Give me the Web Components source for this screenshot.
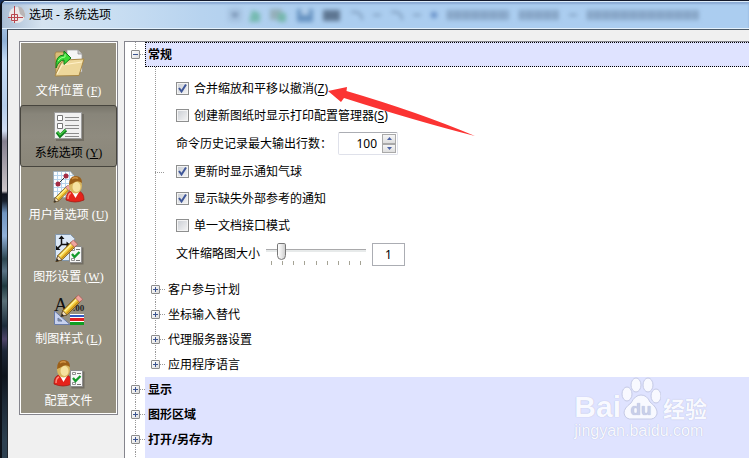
<!DOCTYPE html>
<html lang="zh-CN">
<head>
<meta charset="utf-8">
<meta name="viewport" content="width=device-width, initial-scale=1">
<title>选项 - 系统选项</title>
<style>
    html, body { height: 100%; }
    body {
        margin: 0;
        font: 12px/16px "Noto Sans", "Noto Sans CJK SC", sans-serif;
        color: #000;
        background: #16305e;
        overflow: hidden;
    }
</style>
</head>
<body>
<options-window caption="选项 - 系统选项">
    <side-bar slot="side">
        <side-item icon="folder" label="文件位置" key="F"></side-item>
        <side-item icon="list" label="系统选项" key="Y" selected></side-item>
        <side-item icon="user" label="用户首选项" key="U"></side-item>
        <side-item icon="drawing" label="图形设置" key="W"></side-item>
        <side-item icon="style" label="制图样式" key="L"></side-item>
        <side-item icon="profile" label="配置文件"></side-item>
    </side-bar>
    <option-tree>
        <tree-section label="常规" open focused>
            <option-group>
                <check-option label="合并缩放和平移以撤消" key="Z" checked></check-option>
                <check-option label="创建新图纸时显示打印配置管理器" key="S"></check-option>
                <spin-option label="命令历史记录最大输出行数：" value="100"></spin-option>
                <check-option label="更新时显示通知气球" checked></check-option>
                <check-option label="显示缺失外部参考的通知" checked></check-option>
                <check-option label="单一文档接口模式"></check-option>
                <slider-option label="文件缩略图大小" value="1"></slider-option>
                <pointer-arrow slot="mark"></pointer-arrow>
            </option-group>
            <tree-leaf label="客户参与计划"></tree-leaf>
            <tree-leaf label="坐标输入替代"></tree-leaf>
            <tree-leaf label="代理服务器设置"></tree-leaf>
            <tree-leaf label="应用程序语言" last></tree-leaf>
        </tree-section>
        <tree-section label="显示"></tree-section>
        <tree-section label="图形区域"></tree-section>
        <tree-section label="打开/另存为"></tree-section>
        <tree-section label=""></tree-section>
    </option-tree>
    <site-mark slot="mark"></site-mark>
</options-window>

<script>
// small helper shared by all the elements
class BaseElement extends HTMLElement {
    constructor(){
        super();
        this.attachShadow({mode: 'open'});
    }
    attr(name) {
        return this.getAttribute(name) || '';
    }
    connectedCallback(){
        const template = document.createElement('template');
        template.innerHTML = `<style>:host,*{box-sizing:border-box}${this.getStyles()}</style>${this.getMarkup()}`;
        this.shadowRoot.replaceChildren(template.content.cloneNode(true));
    }
}

// plus / minus box of the tree
const toggleStyles = `
    .toggle{
        flex: none;
        width: 9px;
        height: 9px;
        padding: 0;
        border: 1px solid #8b8b8b;
        border-radius: 1px;
        background: linear-gradient(135deg, #fff, #dcdcdc);
    }
    .toggle svg{ display: block; }
    .dots{
        flex: none;
        height: 1px;
        background: repeating-linear-gradient(90deg, #999 0 1px, transparent 1px 2px);
    }
`;
const toggleButton = (open, label) => `
    <button class="toggle" aria-label="${label}" aria-expanded="${open}">
        <svg width="7" height="7" viewBox="0 0 7 7" shape-rendering="crispEdges"><path d="M1 3h5v1H1z${open ? '' : 'M3 1h1v5H3z'}" fill="#3b5490"/></svg>
    </button>`;

const pencil = (x, y) => `
    <g transform="translate(${x} ${y}) scale(1.2)">
        <path d="M0 18 1.500 13 13 1.500 16.500 5 5 16.500Z" fill="#f5cf3c" stroke="#6a4a12" stroke-width=".8"/>
        <path d="M3 13.500 13.500 3" stroke="#fff2a0" stroke-width="1.2"/>
        <path d="M4.500 15.500 15.500 4.500" stroke="#c88a16"/>
        <path d="M0 18 1.500 13 5 16.500Z" fill="#f4dfba" stroke="#5b4325" stroke-width=".6"/>
        <path d="M0 18 .8 15.500 2.500 17.200Z" fill="#222"/>
        <path d="M12 2.500 14.500 0 18 3.500 15.500 6Z" fill="#f0a59e" stroke="#a85550" stroke-width=".6"/>
    </g>`;
const person = (x, y) => `
    <g transform="translate(${x} ${y})">
        <path d="M0 21Q0 13 5 12H12Q18 13 18 21 9 25 0 21Z" fill="#e5231b" stroke="#a1140d" stroke-width=".7"/>
        <path d="M2 20Q2 15 5 14" stroke="#ff8a78" fill="none" stroke-width="1.500"/>
        <path d="M6 13 9.500 19 13 13Z" fill="#fff"/>
        <ellipse cx="9.500" cy="6.500" rx="6.500" ry="8" fill="#d9b75f"/>
        <ellipse cx="10.500" cy="8" rx="4" ry="5" fill="#f6e29f"/>
        <path d="M3 6Q3 -3 9.500 -3 16 -3 16 4 12 1 9 3 6 5 3 6Z" fill="#9c5f18"/>
        <path d="M6 0Q9 -2.500 12 -.5" stroke="#cf9141" fill="none" stroke-width="1.500"/>
    </g>`;
const checkPage = (x, y) => `
    <g transform="translate(${x} ${y})">
        <path d="M1.500 1.500h13v17h-13z" fill="#55524a" opacity=".55"/>
        <path d="M.5.500h12v16H.5z" fill="#f7f7f7" stroke="#8d8d8d"/>
        <path d="M2.500 2.500h3v2h-3zM2.500 12.500h3v2h-3z" fill="#fff" stroke="#777" stroke-width=".8"/>
        <path d="M7 3.500h4M7 14.500h4" stroke="#777"/>
        <path d="M3 8 5.500 11 10.500 6" fill="none" stroke="#159b2d" stroke-width="2.300"/>
    </g>`;

const icons = {
    folder: `
        <path d="M2 7 3 5h7l2 2h6v21H3Z" fill="#d9bd79" stroke="#a18242" stroke-width=".8"/>
        <path d="M14 3h11l4 4v18H14Z" fill="#f5f5f5" stroke="#9b9b9b" stroke-width=".7"/>
        <path d="M25 3v4h4" fill="#ccc" stroke="#888" stroke-width=".7"/>
        <path d="M2 29 8 16 12 13 31 12 26 28.500Z" fill="#edd79b" stroke="#a98845"/>
        <path d="M4 27 9 18 29 15" fill="none" stroke="#fff0c7" stroke-width="1.200"/>
        <path d="M3 21Q2 8 11 8V4L18 11 11 17.500V13Q6 13 3 21Z" fill="#39d936" stroke="#13791a"/>
        <path d="M5 14Q7 10 12 10V7" fill="none" stroke="#a5ff93"/>`,
    list: `
        <path d="M3 5h28v27H3z" fill="#55524a" opacity=".5"/>
        <path d="M1.500 3.500h27v26h-27z" fill="#f1f1f1" stroke="#9d9d9d"/>
        <path d="M4.500 6.500h5v5h-5zM4.500 14.500h5v5h-5z" fill="#fff" stroke="#777"/>
        <path d="M12 8.500h14M12 11.500h14M12 16.500h14M12 19.500h14M12 24.500h14M12 27.500h14" stroke="#8b8b8b"/>
        <path d="M4 23 7 27 13 21" fill="none" stroke="#0d7c1d" stroke-width="3.200"/>
        <path d="M4.500 23 7 26 12.500 21" fill="none" stroke="#49cf46" stroke-width="1.200"/>`,
    user: `
        <path d="M.5.500h17l4 5v21H.5z" fill="#fbfdff" stroke="#91a6b9" stroke-width=".7"/>
        <path d="M4.500 1v25M8.500 1v25M12.500 1v25M16.500 1v25M1 4.500h20M1 8.500h20M1 12.500h20M1 16.500h20M1 20.500h20" stroke="#b5d3ec"/>
        <path d="M5 13 13 5" stroke="#333"/>
        <circle cx="5" cy="13" r="2.500" fill="#a32a43"/><circle cx="13" cy="5" r="2.500" fill="#a32a43"/>
        <g transform="translate(1 14) scale(.8)">${pencil(0, 0)}</g>${person(13, 8)}`,
    drawing: `
        <path d="M2.500 1.500h15l4 4v22h-19z" fill="#dce9f7" stroke="#8297ac"/>
        <path d="M8.500 4v7.500H15M8.500 11.500 5 15" fill="none" stroke="#111" stroke-width="1.500"/>
        <path d="M5.500 6 8.500 2.500 11.500 6ZM13.500 8.500 17 11.500 13.500 14.500ZM3 12.500V17h4.500Z" fill="#111"/>
        ${checkPage(16, 13)}${pencil(3, 7)}`,
    style: `
        <path d="M17 19h14v3H17z" fill="#315bc1"/><path d="M17 19h14v1H17zM17 22h14v1H17zM17 26h14v1H17z" fill="#fff"/>
        <path d="M17 23h14v3H17z" fill="#df1d22"/><path d="M17 27h14v3H17z" fill="#119d22"/>
        <path d="M1.500 16 17 29.500H1.500ZM5 23v3h4Z" fill="#c8d2ee" stroke="#697ca8" fill-rule="evenodd"/>
        <text x="1" y="16" font-family="Liberation Serif" font-size="19" fill="#111">A</text>
        ${pencil(8, 0)}
        <text x="20" y="16" font-family="Liberation Serif" font-size="9" font-weight="700" fill="#222">.00</text>`,
    profile: `${person(1, 6)}${checkPage(17, 13)}`
};

class OptionsWindow extends BaseElement {
    getMarkup() {
        return `
        <header>
            <svg class="logo" width="18" height="18" viewBox="0 0 18 18">
                <circle cx="9" cy="9" r="8" fill="#ebe7e8"/>
                <path d="M10 0Q18 2 17 12L12 8Z" fill="#b9b5b6"/>
                <path d="M6.500 0v17M0 11.500h15" stroke="#b9474e"/>
                <path d="M3.500 8.500h6v6h-6z" fill="none" stroke="#b9474e"/>
            </svg>
            <h1>${this.attr('caption')}</h1>
            <div class="glass" aria-hidden="true">
                <svg width="113" height="20" viewBox="0 0 113 20">
                    <path d="M0 3h14v14H0z" fill="#9db9d8"/><path d="M3 8h8l-4 5z" fill="#3c5474"/>
                    <path d="M24 5l8 3v9h-11z" fill="#4fac88"/>
                    <path d="M42 4h12v11H42z" fill="#849b98"/><path d="M50 8h8v9h-8z" fill="#50a880"/>
                    <path d="M69 4h16v13H69z" fill="#3d6fa5"/><path d="M73 4h8v6h-8z" fill="#b2cbe5"/>
                    <path d="M95 5h17v11H95z" fill="#2c3e55"/>
                </svg>
                <i class="undo"></i><i></i><i class="undo"></i><i></i><i class="dot"></i>
                <i class="name"></i><i class="year"></i><i></i><i class="file"></i>
            </div>
        </header>
        <main>
            <slot name="side"></slot>
            <slot></slot>
        </main>
        <slot name="mark"></slot>`;
    }
    getStyles() {
        return `
        :host{
            position: relative;
            display: flex;
            flex-direction: column;
            height: 100vh;
            padding-left: 5px;
            border-left: 2px solid #0d1118;
            border-top: 1px solid #12182a;
            background: linear-gradient(#c4d8ee 0, #8fb0d6 40px, #c6dcf5 60px, #b5cdea 105px, #d0dcf0 130px, #85808f 140px, #cbc5c8 190px, #10141f 193px, #18202c 200px, #7095c0 212px, #90b0d8 235px, #2c4650 258px, #5a7385 270px, #1f3a40 285px, #5a7078 300px, #1c2c3a 325px, #4d4468 338px, #1c2636 350px, #0e141c 375px, #1c2835 400px, #2d4050 440px);
            border-radius: 6px 0 0 0;
            overflow: hidden;
        }
        header{
            display: flex;
            align-items: center;
            height: 28px;
            flex: none;
            margin-left: -5px;
            padding-left: 6px;
            border-top: 1px solid #dcecfa;
            border-bottom: 1px solid #e4f1fc;
            background: linear-gradient(90deg, #a9bdd4, #d5e3f0 40px, #c9def2 110px, #b7d3ef 200px, #abcdef 300px, #abcdf0);
            box-shadow: inset 0 2px 2px #8aa9d3;
        }
        .logo{ flex: none; }
        h1{
            margin: 0 0 0 3px;
            font-size: 12px;
            font-weight: 400;
            white-space: nowrap;
        }
        /* what shines through the frame from the window behind */
        .glass{
            display: flex;
            align-items: center;
            gap: 10px;
            margin-left: 117px;
            filter: blur(2px);
            opacity: .6;
        }
        .glass i{ flex: none; width: 8px; height: 2px; background: #5d7797; }
        .glass .undo{ width: 12px; height: 9px; border: solid #5d7797; border-width: 2px 2px 0 0; border-radius: 0 8px 0 0; background: none; }
        .glass .dot{ width: 6px; height: 6px; background: #3f6cb0; }
        .glass .name{ width: 62px; }
        .glass .year{ width: 40px; }
        .glass .file{ width: 112px; }
        .glass .name, .glass .year, .glass .file{
            height: 10px;
            background: repeating-linear-gradient(90deg, #6580a0 0 3px, #86a3c4 3px 5px, #6f8bab 5px 8px, #96b4d5 8px 9px);
        }
        main{
            flex: 1;
            min-height: 0;
            display: flex;
            gap: 6px;
            align-items: flex-start;
            padding: 11px 0 0 11px;
            border-top: 1px solid #4d5b69;
            border-left: 1px solid #20252c;
            background: #f0f0f0;
        }
        `;
    }
}
customElements.define("options-window", OptionsWindow);

class SideBar extends BaseElement {
    getMarkup() {
        return `<nav><slot></slot></nav>`;
    }
    getStyles() {
        return `
        :host{
            display: block;
            flex: none;
            width: 99px;
            border: 1px solid #85858d;
        }
        nav{
            border: 1px solid #fff;
            background: #959080;
        }
        `;
    }
}
customElements.define("side-bar", SideBar);

class SideItem extends BaseElement {
    getMarkup() {
        const key = this.attr('key') ? `<span>(<u>${this.attr('key')}</u>)</span>` : '';
        return `
        <button>
            <svg width="32" height="32" viewBox="0 0 32 32" aria-hidden="true">${icons[this.attr('icon')]}</svg>
            <span class="label">${this.attr('label')}${key}</span>
        </button>`;
    }
    getStyles() {
        return `
        :host{ display: block; height: 62px; }
        :host([selected]){ margin: 0 -1px; }
        :host(:last-child){ height: 60px; }
        button{
            display: flex;
            flex-direction: column;
            align-items: center;
            gap: 4px;
            width: 100%;
            height: 100%;
            padding: 3px 0 0;
            border: 1px solid transparent;
            border-radius: 3px;
            background: none;
            color: #fff;
            font: 12px/16px "Liberation Serif", "Noto Sans CJK SC", serif;
        }
        :host([selected]) button{
            color: #000;
            border-color: #47453e;
            background: linear-gradient(#78756a, #88857a 8px, #8f8b7f 50%, #8a8679);
        }
        svg{ flex: none; overflow: visible; }
        .label{ display: flex; gap: 3px; white-space: nowrap; }
        `;
    }
}
customElements.define("side-item", SideItem);

class OptionTree extends BaseElement {
    getMarkup() {
        return `<slot></slot>`;
    }
    getStyles() {
        return `
        :host{
            display: block;
            flex: 1;
            align-self: stretch;
            overflow: hidden;
            border: solid #85858d;
            border-width: 1px 0 0 1px;
            background: #fff;
        }
        `;
    }
}
customElements.define("option-tree", OptionTree);

class TreeSection extends BaseElement {
    getMarkup() {
        const label = this.attr('label');
        return `
        <div class="row">
            <div class="branch">${label ? toggleButton(this.hasAttribute('open'), label) + '<span class="dots"></span>' : ''}</div>
            <h2>${label}</h2>
        </div>
        <div class="children"><slot></slot></div>`;
    }
    getStyles() {
        return `
        ${toggleStyles}
        :host{
            display: block;
            background: repeating-linear-gradient(#999 0 1px, transparent 1px 2px) 10px 0 / 1px 100% no-repeat;
        }
        .row{
            display: flex;
            align-items: center;
            height: 25px;
        }
        .branch{
            display: flex;
            align-items: center;
            flex: none;
            width: 20px;
            padding-left: 6px;
        }
        .dots{ width: 5px; }
        h2{
            flex: 1;
            align-self: stretch;
            margin: 0;
            padding-left: 2px;
            border: 1px solid #dfe3ff;
            border-right: 0;
            background: #dfe3ff;
            font-size: 12px;
            font-weight: 700;
            line-height: 23px;
        }
        :host([focused]) h2{ border: 1px dotted #000; border-right: 0; }
        .children{ padding-left: 26px; }
        `;
    }
}
customElements.define("tree-section", TreeSection);

class TreeLeaf extends BaseElement {
    getMarkup() {
        return `${toggleButton(false, this.attr('label'))}<span class="dots"></span><span class="text">${this.attr('label')}</span>`;
    }
    getStyles() {
        return `
        ${toggleStyles}
        :host{
            display: flex;
            align-items: center;
            height: 25px;
            background: repeating-linear-gradient(#999 0 1px, transparent 1px 2px) 4px 0 / 1px 100% no-repeat;
        }
        :host([last]){ background-size: 1px 12px; }
        .dots{ width: 5px; }
        .text{ padding-left: 3px; }
        `;
    }
}
customElements.define("tree-leaf", TreeLeaf);

class OptionGroup extends BaseElement {
    getMarkup() {
        return `
        <span class="dots"></span>
        <div class="options"><slot></slot></div>
        <slot name="mark"></slot>`;
    }
    getStyles() {
        return `
        ${toggleStyles}
        :host{
            position: relative;
            display: flex;
            align-items: center;
            padding-left: 4px;
            background: repeating-linear-gradient(#999 0 1px, transparent 1px 2px) 4px 0 / 1px 100% no-repeat;
        }
        .dots{ width: 10px; }
        .options{ flex: 1; padding: 8px 0 8px 11px; }
        `;
    }
}
customElements.define("option-group", OptionGroup);

class CheckOption extends BaseElement {
    getMarkup() {
        const key = this.attr('key') ? `(<u>${this.attr('key')}</u>)` : '';
        return `
        <label>
            <input type="checkbox" ${this.hasAttribute('checked') ? 'checked' : ''}>
            <svg width="13" height="13" viewBox="0 0 13 13" aria-hidden="true"><path d="M3 6 5.500 9.500 10 2.500" fill="none" stroke="#3f5799" stroke-width="2"/></svg>
            <span>${this.attr('label')}${key}</span>
        </label>`;
    }
    getStyles() {
        return `
        :host{ display: flex; align-items: center; height: 27px; }
        label{
            display: grid;
            grid-template-columns: 13px auto;
            align-items: center;
            column-gap: 5px;
            white-space: nowrap;
        }
        input{
            appearance: none;
            grid-area: 1 / 1;
            width: 13px;
            height: 13px;
            margin: 0;
            border: 1px solid #8e8f8f;
            background: linear-gradient(135deg, #c9cdd3, #f6f6f6);
            box-shadow: inset 0 0 0 1px #f4f4f4;
        }
        svg{ grid-area: 1 / 1; pointer-events: none; visibility: hidden; }
        input:checked + svg{ visibility: visible; }
        u{ text-underline-offset: 2px; }
        `;
    }
}
customElements.define("check-option", CheckOption);

class SpinOption extends BaseElement {
    getMarkup() {
        return `
        <label for="field">${this.attr('label')}</label>
        <div class="box">
            <input id="field" type="text" value="${this.attr('value')}">
            <div class="buttons">
                <button aria-label="增加"><svg width="5" height="3" viewBox="0 0 5 3"><path d="M0 3 2.500 0 5 3Z" fill="#4c63a5"/></svg></button>
                <button aria-label="减少"><svg width="5" height="3" viewBox="0 0 5 3"><path d="M0 0h5L2.500 3Z" fill="#4c63a5"/></svg></button>
            </div>
        </div>`;
    }
    getStyles() {
        return `
        :host{ display: flex; align-items: center; gap: 6px; height: 29px; }
        .box{
            display: flex;
            width: 60px;
            height: 23px;
            padding: 1px;
            border: 1px solid #dfe1ea;
            border-top-color: #abadb3;
            border-radius: 2px;
            background: #fff;
        }
        input{
            flex: 1;
            min-width: 0;
            padding: 0 5px 0 0;
            border: 0;
            background: none;
            color: #000;
            font: inherit;
            text-align: right;
        }
        .buttons{ display: flex; flex-direction: column; width: 14px; }
        button{
            display: grid;
            place-items: center;
            flex: 1;
            padding: 0;
            border: 1px solid #a9a9a9;
            background: linear-gradient(#f6f6f6, #dedede);
        }
        `;
    }
}
customElements.define("spin-option", SpinOption);

class SliderOption extends BaseElement {
    getMarkup() {
        return `
        <label for="range">${this.attr('label')}</label>
        <div class="slider">
            <input id="range" type="range" min="0" max="8" value="${this.attr('value')}">
            <div class="ticks">${'<i></i>'.repeat(9)}</div>
        </div>
        <input class="value" type="text" aria-label="${this.attr('label')}" value="${this.attr('value')}">`;
    }
    getStyles() {
        return `
        :host{ display: flex; align-items: center; gap: 6px; height: 30px; }
        .slider{ width: 100px; height: 23px; }
        #range{
            appearance: none;
            display: block;
            width: 100%;
            height: 17px;
            margin: 0;
            background: linear-gradient(#a9a9ab 0 1px, #e7eaea 1px) 0 6px / 100% 3px no-repeat;
        }
        #range::-webkit-slider-thumb{
            appearance: none;
            box-sizing: border-box;
            width: 9px;
            height: 17px;
            border: 1px solid #777;
            border-radius: 2px 2px 5px 5px;
            background: linear-gradient(90deg, #fff, #e9e9e9 50%, #cfcfcf);
        }
        .ticks{ display: flex; justify-content: space-between; margin-top: 1px; padding: 0 5px; }
        .ticks i{ width: 1px; height: 4px; background: #a5a395; }
        .value{
            width: 33px;
            height: 23px;
            padding: 0;
            border: 1px solid #abadb3;
            background: #fff;
            color: #000;
            font: inherit;
            text-align: center;
        }
        `;
    }
}
customElements.define("slider-option", SliderOption);

// red arrow lying over the first options
class PointerArrow extends BaseElement {
    getMarkup() {
        return `<svg width="148" height="52" viewBox="0 0 148 52"><path d="M0 7 19 3 18.500 7Q90 28 147 52 88 37 16 14L13 18Z" fill="#fb3433"/></svg>`;
    }
    getStyles() {
        return `
        :host{ position: absolute; left: 177px; top: 17px; pointer-events: none; }
        svg{ display: block; }
        `;
    }
}
customElements.define("pointer-arrow", PointerArrow);

class SiteMark extends BaseElement {
    getMarkup() {
        return `
        <div class="brand">
            <span class="latin">Bai</span>
            <svg width="40" height="44" viewBox="0 0 40 44">
                <g fill="#f8f9ff" stroke="#c5cae6">
                    <ellipse cx="6" cy="17" rx="5" ry="7"/>
                    <ellipse cx="15" cy="8" rx="5" ry="7"/>
                    <ellipse cx="27" cy="8" rx="5" ry="7"/>
                    <ellipse cx="35" cy="19" rx="5" ry="7"/>
                    <path d="M20 18Q26 18 29 25 37 31 36 37 34 43 27 42H12Q4 43 3 36 3 31 10 26 14 18 20 18Z"/>
                </g>
                <text x="20" y="38" text-anchor="middle" font-family="Liberation Sans" font-size="17" font-weight="700" fill="#c9cfea">du</text>
            </svg>
            <span class="han">经验</span>
        </div>
        <div class="site">jingyan.baidu.com</div>`;
    }
    getStyles() {
        return `
        :host{
            position: absolute;
            right: 42px;
            bottom: 17px;
            color: #f8f9ff;
            pointer-events: none;
            text-shadow: 0 0 1px #a9b0d2;
        }
        .brand{ display: flex; align-items: flex-end; height: 44px; }
        .latin{ font: 700 30px/28px "Liberation Sans", sans-serif; }
        .han{ font: 700 22px/28px "Noto Sans CJK SC", sans-serif; margin-left: 2px; }
        .site{ font: 16px/20px "Liberation Sans", sans-serif; }
        svg{ display: block; }
        `;
    }
}
customElements.define("site-mark", SiteMark);
</script>
</body>
</html>
